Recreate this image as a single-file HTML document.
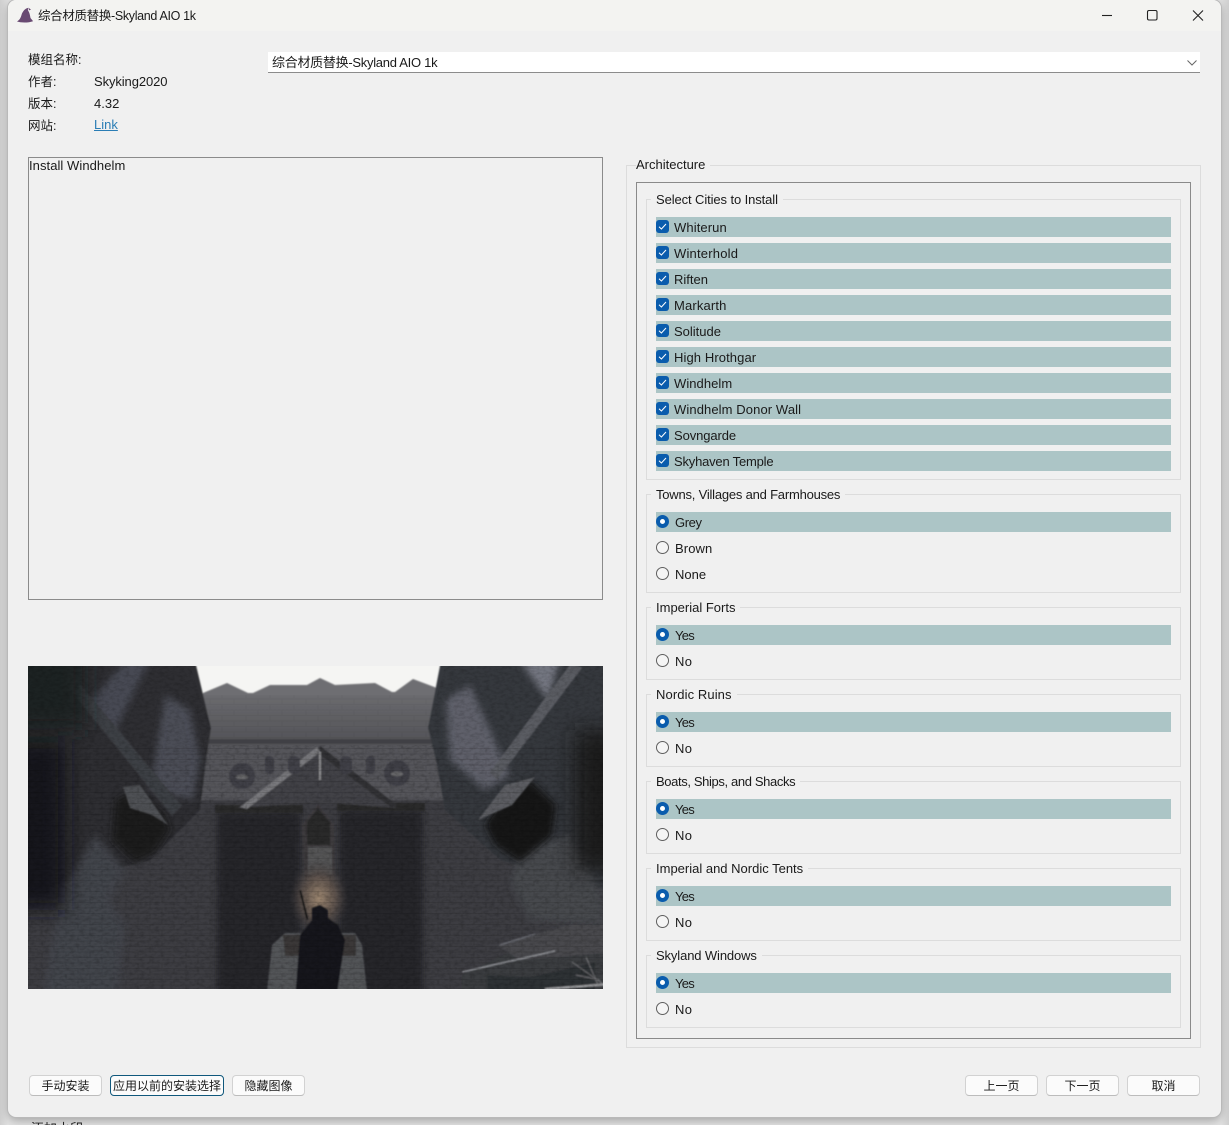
<!DOCTYPE html>
<html lang="zh">
<head>
<meta charset="utf-8">
<title>综合材质替换-Skyland AIO 1k</title>
<style>
html,body{margin:0;padding:0;width:1229px;height:1125px;overflow:hidden;background:#d9d9d9}
body{position:relative;font:13px/16px "Liberation Sans","Noto Sans CJK SC",sans-serif;color:#1a1a1a}
.a{position:absolute}
.t{position:absolute;white-space:nowrap;line-height:16px}
#win{left:8px;top:0;width:1213px;height:1117px;background:#f0f0f0;border-radius:8px;box-shadow:0 0 0 1px #b9b9b9,0 3px 10px rgba(0,0,0,.3);overflow:hidden}
#bar{left:0;top:0;width:1213px;height:31px;background:#f3f3f1}
.g{position:absolute;box-sizing:border-box;left:646px;width:535px;border:1px solid #dcdcdc}
.gl{position:absolute;white-space:nowrap;left:651px;padding:0 5px;background:#f0f0f0;line-height:16px}
.hl{position:absolute;left:656px;width:515px;height:20px;background:#acc5c6}
.c{position:absolute;left:656px;width:13px;height:13px;border-radius:3px;background:#0a5cad}
.c svg{display:block}
.r{position:absolute;left:656px;width:13px;height:13px;box-sizing:border-box;border-radius:50%;border:1px solid #5f5f5f;background:#f5f5f5}
.r.on{border:4px solid #0a5cad;background:#fff}
.y{letter-spacing:-.7px}
.b{position:absolute;box-sizing:border-box;top:1075px;height:21px;border:1px solid #d2d2d2;border-bottom-color:#bcbcbc;border-radius:4px;background:#fbfbfb;text-align:center;line-height:21px;white-space:nowrap;color:#1a1a1a}
</style>
</head>
<body>
<div class="a" style="left:0;top:0;width:1229px;height:1125px;background:linear-gradient(90deg,#cfcfcf,#e2e2e2 8px,#e2e2e2 1221px,#cfcfcf)"></div>
<div class="a" style="left:165px;top:0;width:345px;height:1px;background:#5c5148"></div>
<div class="a" style="left:510px;top:0;width:500px;height:1px;background:#b9b5ae"></div>
<div class="a" id="win"><div class="a" id="bar"></div></div>
<div class="t" style="left:31px;top:1121px;color:#222">添加水印</div>

<svg class="a" style="left:16px;top:7px" width="18" height="16" viewBox="0 0 18 16"><path d="M1 14.5 C3.5 13 4.6 11 5.5 8 C6.5 4.5 9 1.5 12.5 .8 C11.6 2 11.8 3.2 12.6 4.4 C13.6 6 14 8.5 14.5 11 C15.4 12.2 16.4 13 17 14.2 C13 15.8 5 15.9 1 14.5Z" fill="#694a72"/><path d="M12.5 .8 L15 2.6 L13 3.4Z" fill="#694a72"/></svg>
<div class="t" style="left:38px;top:8px;font-size:12.5px;letter-spacing:-.33px">综合材质替换-Skyland AIO 1k</div>
<svg class="a" style="left:1095px;top:5px" width="115" height="20" viewBox="1095 5 115 20" fill="none" stroke="#222" stroke-width="1.1"><path d="M1102 15.5H1112"/><rect x="1147.5" y="10.5" width="9.5" height="9.5" rx="1.5"/><path d="M1193 10.5L1203 20.5M1203 10.5L1193 20.5"/></svg>

<div class="t" style="left:28px;top:52px;font-size:12.5px">模组名称:</div>
<div class="t" style="left:28px;top:74px;font-size:12.5px">作者:</div>
<div class="t" style="left:94px;top:74px;letter-spacing:-.1px">Skyking2020</div>
<div class="t" style="left:28px;top:96px;font-size:12.5px">版本:</div>
<div class="t" style="left:94px;top:96px">4.32</div>
<div class="t" style="left:28px;top:118px;font-size:12.5px">网站:</div>
<div class="t" style="left:94px;top:117px;color:#2a7db5;text-decoration:underline">Link</div>

<div class="a" style="left:268px;top:52px;width:932px;height:21px;box-sizing:border-box;background:#fff;border-bottom:1px solid #8c8c8c"></div>
<div class="t" style="left:272px;top:55px;letter-spacing:-.28px">综合材质替换-Skyland AIO 1k</div>
<svg class="a" style="left:1186px;top:59px" width="12" height="8" viewBox="0 0 12 8" fill="none" stroke="#666" stroke-width="1"><path d="M1.5 1.5L6 6L10.5 1.5"/></svg>

<div class="a" style="left:28px;top:157px;width:575px;height:443px;box-sizing:border-box;border:1px solid #8b8b8b"></div>
<div class="t" style="left:29px;top:158px;letter-spacing:.06px">Install Windhelm</div>

<svg class="a" style="left:28px;top:666px" width="575" height="323" viewBox="28 666 575 323">
<defs>
<filter id="s" x="-5%" y="-5%" width="110%" height="110%"><feGaussianBlur stdDeviation=".8"/></filter>
<filter id="m" x="-40%" y="-40%" width="180%" height="180%"><feGaussianBlur stdDeviation="3.5"/></filter>
<filter id="l" x="-60%" y="-60%" width="220%" height="220%"><feGaussianBlur stdDeviation="10"/></filter>
<filter id="nz"><feTurbulence type="fractalNoise" baseFrequency=".2 .36" numOctaves="3" seed="4"/><feColorMatrix values="0 0 0 0 0  0 0 0 0 0  0 0 0 0 0  1.4 0 0 0 -.55"/></filter>
<linearGradient id="bd" x1="0" y1="0" x2="0" y2="1"><stop offset="0" stop-color="#6a6a6e"/><stop offset=".55" stop-color="#5d5d61"/><stop offset="1" stop-color="#545458"/></linearGradient>
<radialGradient id="gw" cx=".5" cy=".5" r=".5"><stop offset="0" stop-color="#9c8670"/><stop offset=".55" stop-color="#5d524c"/><stop offset="1" stop-color="#3a3739" stop-opacity="0"/></radialGradient>
<pattern id="br" width="24" height="11" patternUnits="userSpaceOnUse"><path d="M0 .5H24M0 6H24M6 0V6M18 6V11" stroke="#000" stroke-opacity=".4" fill="none"/></pattern>
<clipPath id="wc"><path d="M0 640H190L211 728L206 760L445 760L428 728L445 640H640V1000H0Z"/></clipPath>
<clipPath id="nc"><path d="M28 666H190L211 728L206 745H436L428 728L445 666H603V989H28Z"/></clipPath>
</defs>
<rect x="28" y="666" width="575" height="323" fill="#f5f5f3"/>
<g filter="url(#s)">
<path d="M180 740L203 693L227 683L248 693L253 693L270 685L307 685L320 678L335 685L375 683L392 692L395 692L413 679L437 688L460 740Z" fill="#6e6e72"/>
<rect x="195" y="695" width="250" height="46" fill="url(#bd)"/>
<rect x="175" y="740" width="290" height="90" fill="#55555a"/>
<rect x="195" y="739" width="250" height="5" fill="#414145"/>
<rect x="0" y="800" width="640" height="200" fill="#3d3e43"/>
<path d="M0 640H190L211 728L206 760L200 810L150 860L0 900Z" fill="#2d2e32"/>
<path d="M640 640H445L428 728L436 760L445 810L500 860L640 900Z" fill="#36373c"/>
</g>

<g clip-path="url(#wc)">
<g filter="url(#m)">
<path d="M87 705L127 660H150L113 735Z" fill="#464953"/>
<path d="M165 695L190 710L200 760L193 800L150 790Z" fill="#4b4e56"/>
<path d="M446 700L470 685L490 730L510 775L485 790L450 760Z" fill="#5e606a"/>
<path d="M519 660L560 660L548 700Z" fill="#737680"/>
<path d="M60 895L95 835L125 870L110 900L125 925L118 1000H42L50 950Z" fill="#43454c"/>
<path d="M520 850L570 835L600 890L603 925L530 920L510 880Z" fill="#46484e"/>
</g>
<g filter="url(#s)">
<path d="M46 660H60L182 806L172 816Z" fill="#3e3f45"/>
<path d="M572 662L582 668L497 780L490 772Z" fill="#5a5c62"/>
</g>
</g>

<g filter="url(#l)">
<rect x="0" y="740" width="65" height="170" fill="#17171a"/>
<rect x="0" y="640" width="85" height="90" fill="#1f2023"/>
<rect x="575" y="730" width="60" height="140" fill="#1a1a1d"/>
</g>
<g filter="url(#m)">
<rect x="217" y="812" width="84" height="190" fill="#272629"/>
<rect x="339" y="810" width="84" height="190" fill="#272629"/>
<path d="M115 800L135 790L165 815L170 830L155 852L135 862L112 840Z" fill="#1b1b1d"/>
<path d="M485 825L505 795L530 780L556 805L552 835L520 862L495 845Z" fill="#171719"/>
</g>

<g filter="url(#s)">
<rect x="215" y="805" width="88" height="8" fill="#2a2a2c"/>
<rect x="337" y="803" width="88" height="8" fill="#2a2a2c"/>
<path d="M238 808L320 746L396 808L320 802Z" fill="#424247"/>
<path d="M240 807L317 747L320 752L247 809Z" fill="#79797d"/>
<path d="M320 746L397 805L392 808L320 755Z" fill="#323236"/>
<rect x="319" y="752" width="2" height="28" fill="#8e8e91"/>
<g fill="#414146"><circle cx="242" cy="776" r="13"/><circle cx="397" cy="773" r="13"/><rect x="265" y="756" width="9" height="18" rx="4"/><rect x="288" y="756" width="12" height="18" rx="5"/><rect x="340" y="756" width="12" height="18" rx="5"/><rect x="366" y="756" width="9" height="18" rx="4"/></g>
<ellipse cx="242" cy="777" rx="6" ry="2.5" fill="#67676a"/><ellipse cx="397" cy="774" rx="6" ry="2.5" fill="#67676a"/>
<path d="M123 787L140 785L168 825L152 815L130 808Z" fill="#505155"/>
<path d="M478 820L505 785L535 777L512 805Z" fill="#5c5d62"/>
<path d="M304 880L302 825L318 804L334 825L335 880Z" fill="#3c3b3e"/>
<path d="M307 845V822L318 808L330 822V845Z" fill="#29292c"/>
<rect x="308" y="847" width="24" height="28" fill="#555456"/>
</g>
<ellipse cx="319" cy="898" rx="30" ry="38" fill="url(#gw)"/>
<g filter="url(#s)">
<path d="M266 1000L272 945L285 933H355L362 945L368 1000Z" fill="#525458"/>
<path d="M283 935H300V956H285ZM340 935H356V956H340Z" fill="#3b3937"/>
<path d="M295 1000L300 935L312 920V908L320 905L328 910V918L338 925L345 940L336 1000Z" fill="#17171b"/>
<rect x="303" y="890" width="1.6" height="30" transform="rotate(-14 304 905)" fill="#141416"/>
<path d="M462 975L510 952L560 945L640 950V1000H462Z" fill="#3b3c41"/>
<path d="M497 945L535 934L570 925L640 925V950L520 960Z" fill="#48494e"/>
<path d="M462 972L555 951" stroke="#96989d" stroke-width="1.4" fill="none"/>
<path d="M500 945L535 934" stroke="#6f7178" stroke-width="1.4" fill="none"/>
<path d="M487 1000V975L530 977L595 962V1000Z" fill="#2f3034"/>
<path d="M545 989L610 984" stroke="#a5a6a8" stroke-width="2" fill="none"/>
<path d="M572 962L603 984M586 957L598 985M576 975L600 980" stroke="#8b8c8e" stroke-width="1" fill="none" opacity=".7"/>
</g>
<rect x="28" y="745" width="575" height="244" fill="url(#br)" opacity=".25"/>
<rect x="195" y="695" width="250" height="45" fill="url(#br)" opacity=".1"/>
<g clip-path="url(#nc)"><rect x="28" y="666" width="575" height="323" filter="url(#nz)" opacity=".24"/></g>
</svg>

<div class="a" style="left:626px;top:165px;width:575px;height:883px;box-sizing:border-box;border:1px solid #dcdcdc"></div>
<div class="t" style="left:636px;top:157px;padding-right:5px;background:#f0f0f0">Architecture</div>
<div class="a" style="left:636px;top:182px;width:555px;height:857px;box-sizing:border-box;border:1px solid #8a8a8a"></div>

<div class="g" style="top:199px;height:281px"></div><div class="gl" style="top:192px;letter-spacing:-.1px">Select Cities to Install</div>
<div class="g" style="top:494px;height:99px"></div><div class="gl" style="top:487px;letter-spacing:-.21px">Towns, Villages and Farmhouses</div>
<div class="g" style="top:607px;height:73px"></div><div class="gl" style="top:600px">Imperial Forts</div>
<div class="g" style="top:694px;height:73px"></div><div class="gl" style="top:687px;letter-spacing:.1px">Nordic Ruins</div>
<div class="g" style="top:781px;height:73px"></div><div class="gl" style="top:774px;letter-spacing:-.37px">Boats, Ships, and Shacks</div>
<div class="g" style="top:868px;height:73px"></div><div class="gl" style="top:861px;letter-spacing:0">Imperial and Nordic Tents</div>
<div class="g" style="top:955px;height:73px"></div><div class="gl" style="top:948px;letter-spacing:-.12px">Skyland Windows</div>

<div class="hl" style="top:217px"></div><div class="c" style="top:220px"><svg width="13" height="13" viewBox="0 0 13 13"><path d="M3 6.8L5.4 9L10 4" fill="none" stroke="#fff" stroke-width="1"/></svg></div><div class="t" style="left:674px;top:220px;letter-spacing:.1px">Whiterun</div>
<div class="hl" style="top:243px"></div><div class="c" style="top:246px"><svg width="13" height="13" viewBox="0 0 13 13"><path d="M3 6.8L5.4 9L10 4" fill="none" stroke="#fff" stroke-width="1"/></svg></div><div class="t" style="left:674px;top:246px;letter-spacing:.2px">Winterhold</div>
<div class="hl" style="top:269px"></div><div class="c" style="top:272px"><svg width="13" height="13" viewBox="0 0 13 13"><path d="M3 6.8L5.4 9L10 4" fill="none" stroke="#fff" stroke-width="1"/></svg></div><div class="t" style="left:674px;top:272px">Riften</div>
<div class="hl" style="top:295px"></div><div class="c" style="top:298px"><svg width="13" height="13" viewBox="0 0 13 13"><path d="M3 6.8L5.4 9L10 4" fill="none" stroke="#fff" stroke-width="1"/></svg></div><div class="t" style="left:674px;top:298px;letter-spacing:.15px">Markarth</div>
<div class="hl" style="top:321px"></div><div class="c" style="top:324px"><svg width="13" height="13" viewBox="0 0 13 13"><path d="M3 6.8L5.4 9L10 4" fill="none" stroke="#fff" stroke-width="1"/></svg></div><div class="t" style="left:674px;top:324px">Solitude</div>
<div class="hl" style="top:347px"></div><div class="c" style="top:350px"><svg width="13" height="13" viewBox="0 0 13 13"><path d="M3 6.8L5.4 9L10 4" fill="none" stroke="#fff" stroke-width="1"/></svg></div><div class="t" style="left:674px;top:350px;letter-spacing:.1px">High Hrothgar</div>
<div class="hl" style="top:373px"></div><div class="c" style="top:376px"><svg width="13" height="13" viewBox="0 0 13 13"><path d="M3 6.8L5.4 9L10 4" fill="none" stroke="#fff" stroke-width="1"/></svg></div><div class="t" style="left:674px;top:376px;letter-spacing:.05px">Windhelm</div>
<div class="hl" style="top:399px"></div><div class="c" style="top:402px"><svg width="13" height="13" viewBox="0 0 13 13"><path d="M3 6.8L5.4 9L10 4" fill="none" stroke="#fff" stroke-width="1"/></svg></div><div class="t" style="left:674px;top:402px;letter-spacing:.1px">Windhelm Donor Wall</div>
<div class="hl" style="top:425px"></div><div class="c" style="top:428px"><svg width="13" height="13" viewBox="0 0 13 13"><path d="M3 6.8L5.4 9L10 4" fill="none" stroke="#fff" stroke-width="1"/></svg></div><div class="t" style="left:674px;top:428px;letter-spacing:-.1px">Sovngarde</div>
<div class="hl" style="top:451px"></div><div class="c" style="top:454px"><svg width="13" height="13" viewBox="0 0 13 13"><path d="M3 6.8L5.4 9L10 4" fill="none" stroke="#fff" stroke-width="1"/></svg></div><div class="t" style="left:674px;top:454px;letter-spacing:-.2px">Skyhaven Temple</div>

<div class="hl" style="top:512px"></div><div class="r on" style="top:515px"></div><div class="t" style="left:675px;top:515px;letter-spacing:-.4px">Grey</div>
<div class="r" style="top:541px"></div><div class="t" style="left:675px;top:541px;letter-spacing:.1px">Brown</div>
<div class="r" style="top:567px"></div><div class="t" style="left:675px;top:567px">None</div>

<div class="hl" style="top:625px"></div><div class="r on" style="top:628px"></div><div class="t y" style="left:675px;top:628px">Yes</div>
<div class="r" style="top:654px"></div><div class="t" style="left:675px;top:654px;letter-spacing:.4px">No</div>

<div class="hl" style="top:712px"></div><div class="r on" style="top:715px"></div><div class="t y" style="left:675px;top:715px">Yes</div>
<div class="r" style="top:741px"></div><div class="t" style="left:675px;top:741px;letter-spacing:.4px">No</div>

<div class="hl" style="top:799px"></div><div class="r on" style="top:802px"></div><div class="t y" style="left:675px;top:802px">Yes</div>
<div class="r" style="top:828px"></div><div class="t" style="left:675px;top:828px;letter-spacing:.4px">No</div>

<div class="hl" style="top:886px"></div><div class="r on" style="top:889px"></div><div class="t y" style="left:675px;top:889px">Yes</div>
<div class="r" style="top:915px"></div><div class="t" style="left:675px;top:915px;letter-spacing:.4px">No</div>

<div class="hl" style="top:973px"></div><div class="r on" style="top:976px"></div><div class="t y" style="left:675px;top:976px">Yes</div>
<div class="r" style="top:1002px"></div><div class="t" style="left:675px;top:1002px;letter-spacing:.4px">No</div>

<div class="b" style="left:29px;width:73px;font-size:12px">手动安装</div>
<div class="b" style="left:110px;width:114px;font-size:12px;border:1.5px solid #10587c;border-radius:4px;line-height:20px">应用以前的安装选择</div>
<div class="b" style="left:232px;width:73px;font-size:12px">隐藏图像</div>
<div class="b" style="left:965px;width:73px;font-size:12px">上一页</div>
<div class="b" style="left:1046px;width:73px;font-size:12px">下一页</div>
<div class="b" style="left:1127px;width:73px;font-size:12px">取消</div>
</body>
</html>
